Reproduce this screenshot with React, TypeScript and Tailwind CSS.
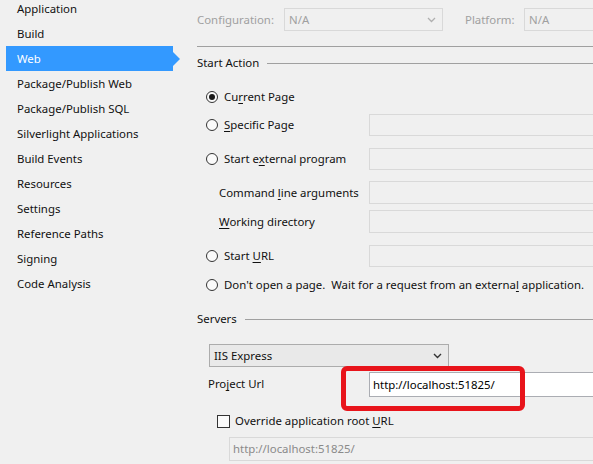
import React from "react";

const font = { fontFamily: '"Noto Sans", "Open Sans", sans-serif' };

function U({ children }: { children: React.ReactNode }) {
  return <span className="underline underline-offset-2 decoration-1">{children}</span>;
}

function Radio({ checked }: { checked?: boolean }) {
  return (
    <span className="flex h-[12px] w-[12px] shrink-0 items-center justify-center rounded-full border border-[#333333] bg-[#fafafa]">
      {checked && <span className="h-[6px] w-[6px] rounded-full bg-[#1a1a1a]" />}
    </span>
  );
}

function Box({ className = "" }: { className?: string }) {
  return <div className={`-mr-[10px] flex-1 border border-[#d9d9d9] bg-[#f0f0f0] ${className}`} />;
}

const sideItems = [
  "Application",
  "Build",
  "Web",
  "Package/Publish Web",
  "Package/Publish SQL",
  "Silverlight Applications",
  "Build Events",
  "Resources",
  "Settings",
  "Reference Paths",
  "Signing",
  "Code Analysis",
];

export default function App() {
  return (
    <div
      className="flex h-[464px] w-[593px] overflow-hidden bg-[#f0f0f0] text-[11.4px] text-[#111111]"
      style={font}
    >
      {/* Sidebar */}
      <div className="-mt-[4px] w-[180px] shrink-0">
        {sideItems.map((it) =>
          it === "Web" ? (
            <div key={it} className="ml-[6px] flex h-[25px] items-center">
              <div className="flex h-full flex-1 items-center bg-[#3399ff] pl-[11px] text-white">{it}</div>
              <div className="h-0 w-0 border-y-[7px] border-l-[7px] border-y-transparent border-l-[#3399ff]" />
            </div>
          ) : (
            <div key={it} className="flex h-[25px] items-center pl-[17px]">
              {it}
            </div>
          )
        )}
      </div>

      {/* Main */}
      <div className="flex flex-1 flex-col pl-[17px] pt-[8px]">
        {/* Config row */}
        <div className="flex h-[23px] items-center text-[#a0a0a0]">
          <span className="w-[87px]">Configuration:</span>
          <div className="flex h-full w-[159px] items-center justify-between border border-[#d9d9d9] pl-[4px] pr-[6px]">
            <span>N/A</span>
            <svg width="9" height="6" viewBox="0 0 9 6">
              <path d="M1 1l3.5 3.5L8 1" fill="none" stroke="#b0b0b0" strokeWidth="1.3" />
            </svg>
          </div>
          <span className="ml-[22px] w-[59px]">Platform:</span>
          <div className="-mr-[10px] flex h-full flex-1 items-center border border-[#d9d9d9] pl-[4px]">N/A</div>
        </div>

        <div className="mt-[15px] h-px bg-[#a0a0a0]" />

        {/* Start Action */}
        <div className="mt-[8px] flex h-[16px] items-center">
          <span>Start Action</span>
          <div className="ml-[8px] h-px flex-1 bg-[#a0a0a0]" />
        </div>

        <div className="mt-[15px] flex h-[22px] items-center pl-[9px]">
          <Radio checked />
          <span className="ml-[6px]">
            Cu<U>r</U>rent Page
          </span>
        </div>

        <div className="mt-[6px] flex h-[22px] items-center pl-[9px]">
          <Radio />
          <span className="ml-[6px] w-[145px]">
            <U>S</U>pecific Page
          </span>
          <Box className="h-full" />
        </div>

        <div className="mt-[12px] flex h-[22px] items-center pl-[9px]">
          <Radio />
          <span className="ml-[6px] w-[145px]">
            Start e<U>x</U>ternal program
          </span>
          <Box className="h-full" />
        </div>

        <div className="mt-[11px] flex h-[23px] items-center pl-[22px]">
          <span className="w-[150px]">
            Command <U>l</U>ine arguments
          </span>
          <Box className="h-full" />
        </div>

        <div className="mt-[6px] flex h-[23px] items-center pl-[22px]">
          <span className="w-[150px]">
            <U>W</U>orking directory
          </span>
          <Box className="h-full" />
        </div>

        <div className="mt-[12px] flex h-[22px] items-center pl-[9px]">
          <Radio />
          <span className="ml-[6px] w-[145px]">
            Start <U>U</U>RL
          </span>
          <Box className="h-full" />
        </div>

        <div className="mt-[7px] flex h-[22px] items-center pl-[9px]">
          <Radio />
          <span className="ml-[6px] whitespace-pre">
            Don't open a page.  Wait for a request from an externa<U>l</U> application.
          </span>
        </div>

        {/* Servers */}
        <div className="mt-[15px] flex h-[16px] items-center">
          <span>Servers</span>
          <div className="ml-[8px] h-px flex-1 bg-[#a0a0a0]" />
        </div>

        <div className="ml-[12px] mt-[17px] flex h-[23px] w-[240px] items-center justify-between border border-[#acacac] bg-[#e9e9e9] pl-[4px] pr-[6px]">
          <span>IIS Express</span>
          <svg width="9" height="6" viewBox="0 0 9 6">
            <path d="M1 1l3.5 3.5L8 1" fill="none" stroke="#333333" strokeWidth="1.4" />
          </svg>
        </div>

        <div className="relative mt-[5px] flex h-[25px] items-center pl-[11px]">
          <span className="-mt-[1px] w-[161px]">
            Pro<U>j</U>ect Url
          </span>
          <div className="-mr-[10px] flex h-full flex-1 items-center border border-[#abadb3] bg-white pl-[3px] text-black">
            http://localhost:51825/
          </div>
          <div className="pointer-events-none absolute left-[144px] top-[-6px] h-[45px] w-[184px] rounded-[6px] border-[5px] border-[#e8141b]" />
        </div>

        <div className="mt-[16px] flex h-[16px] items-center pl-[20px]">
          <span className="h-[13px] w-[13px] shrink-0 border border-[#333333] bg-[#fafafa]" />
          <span className="ml-[5px]">
            Override application root <U>U</U>RL
          </span>
        </div>

        <div className="ml-[32px] mt-[8px] flex h-[24px] items-center">
          <div className="-mr-[10px] flex h-full flex-1 items-center border border-[#d9d9d9] pl-[3px] text-[#8a8a8a]">
            http://localhost:51825/
          </div>
        </div>
      </div>
    </div>
  );
}
